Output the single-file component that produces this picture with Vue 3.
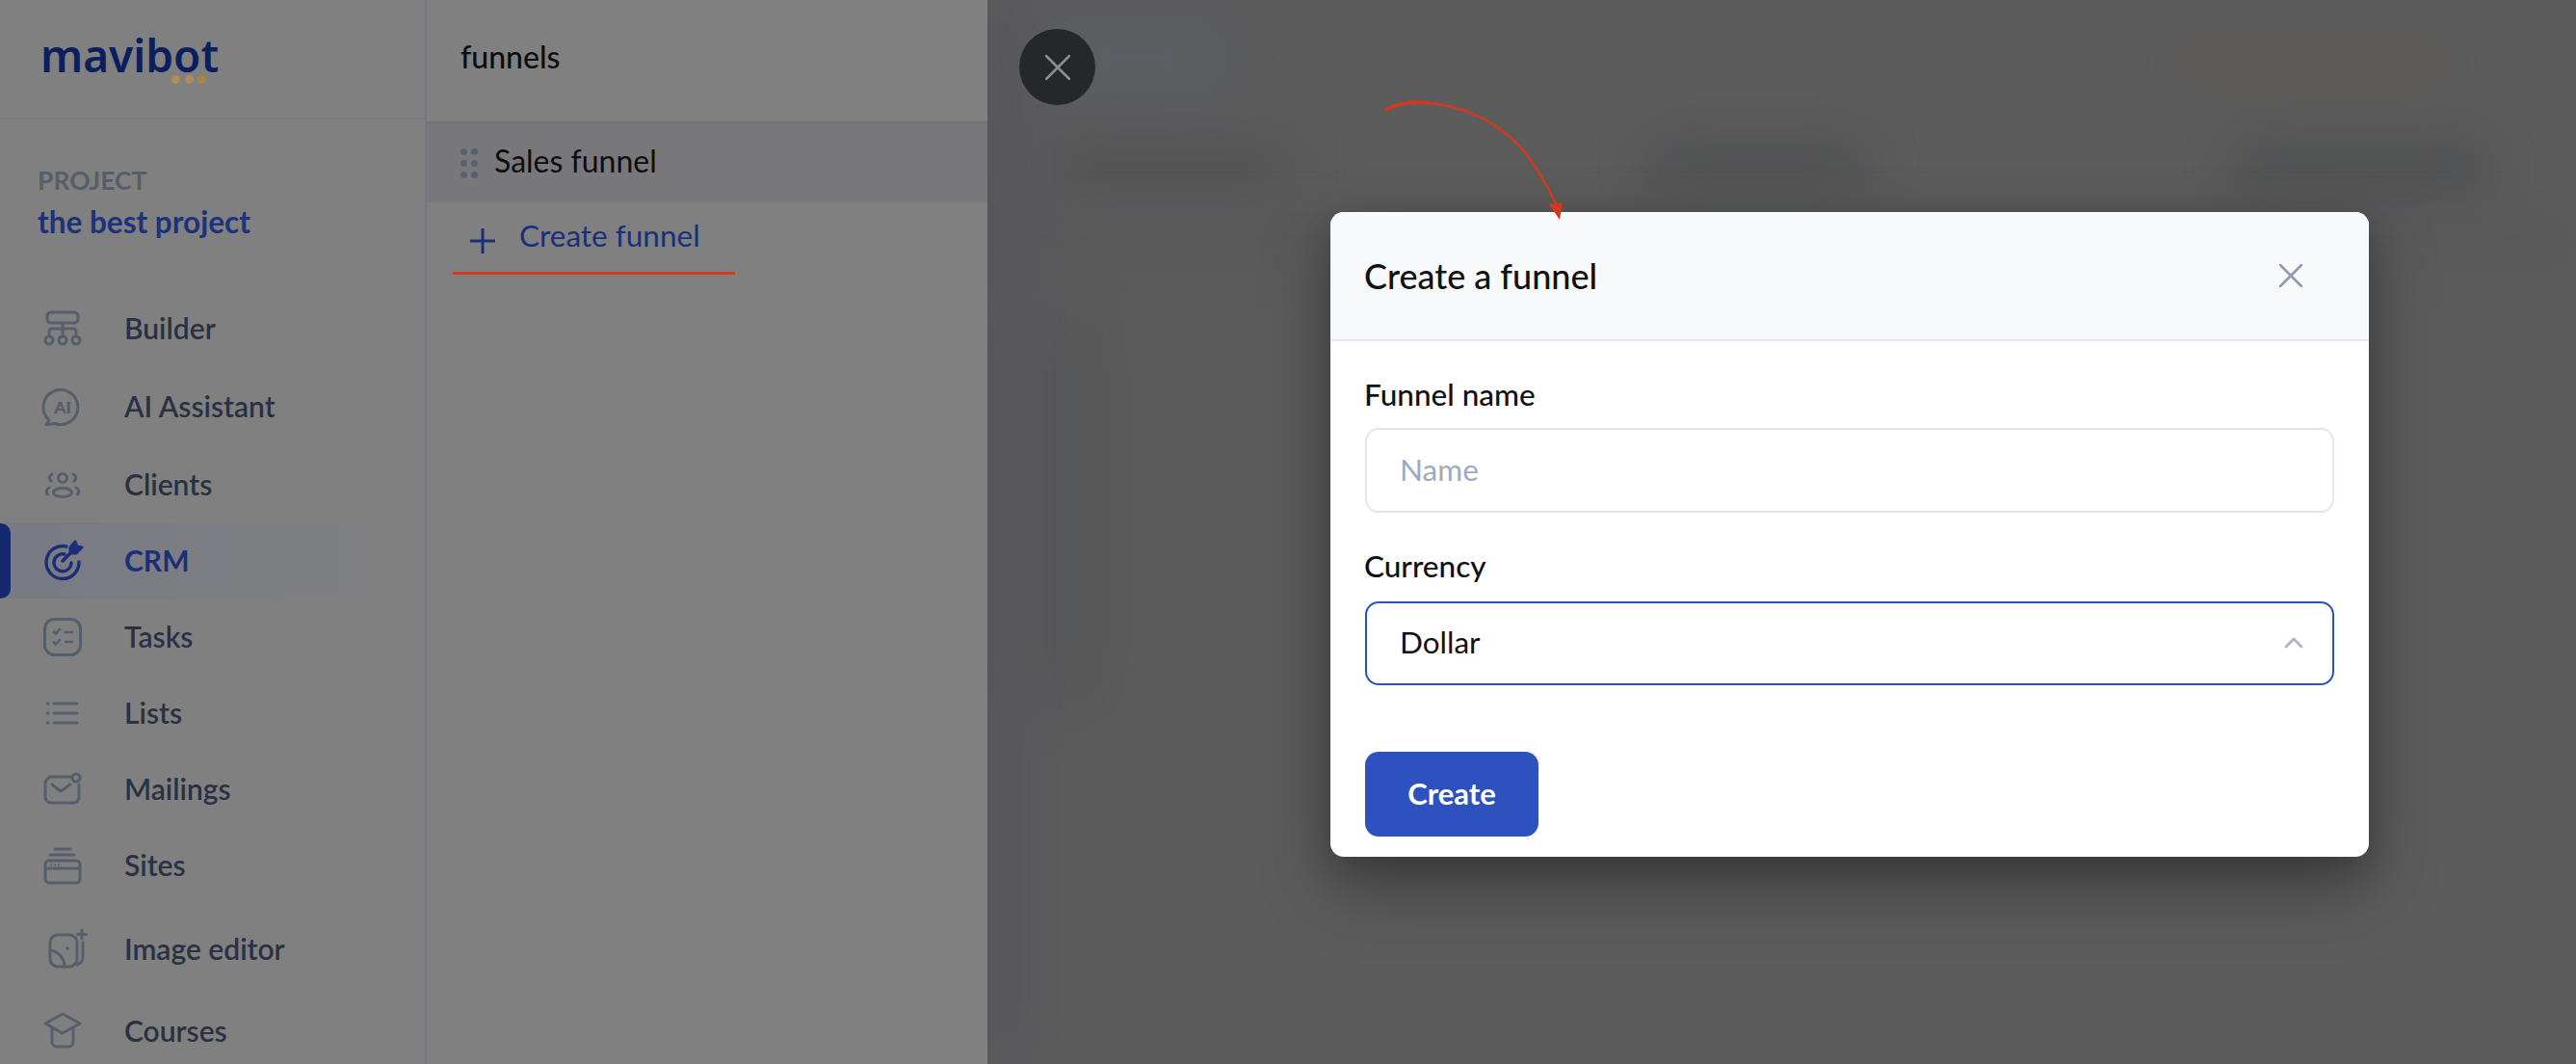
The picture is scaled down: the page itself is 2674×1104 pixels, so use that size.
<script setup>
const navItems = [
  { label: 'Builder', icon: 'builder' },
  { label: 'AI Assistant', icon: 'ai' },
  { label: 'Clients', icon: 'clients' },
  { label: 'CRM', icon: 'crm', active: true },
  { label: 'Tasks', icon: 'tasks' },
  { label: 'Lists', icon: 'lists' },
  { label: 'Mailings', icon: 'mail' },
  { label: 'Sites', icon: 'sites' },
  { label: 'Image editor', icon: 'image' },
  { label: 'Courses', icon: 'courses' }
]
</script>

<template>
  <div class="page">
    <aside class="sidebar">
      <div class="logo-box">
        <div class="logo">mavibot</div>
        <div class="logo-dots"><i></i><i></i><i></i></div>
      </div>
      <div class="project">
        <div class="project-label">PROJECT</div>
        <div class="project-name">the best project</div>
      </div>
      <nav class="nav">
        <div v-for="item in navItems" :key="item.label" class="nav-item" :class="{ active: item.active }">
          <svg class="nav-icon" viewBox="-22 -22 44 44" fill="none" stroke="currentColor" stroke-width="3" stroke-linecap="round" stroke-linejoin="round">
            <template v-if="item.icon === 'builder'">
              <rect x="-16" y="-17" width="32" height="11" rx="4" />
              <path d="M0 -6V6M-14 6V3a3 3 0 0 1 3-3H11a3 3 0 0 1 3 3V6" />
              <circle cx="-14" cy="12" r="4" /><circle cx="0" cy="12" r="4" /><circle cx="14" cy="12" r="4" />
            </template>
            <template v-else-if="item.icon === 'ai'">
              <path d="M-14 14A18 18 0 1 1 -8 17.500L-17 18.500Z" />
              <text x="0" y="6.500" text-anchor="middle" class="ai-text">AI</text>
            </template>
            <template v-else-if="item.icon === 'clients'">
              <circle cx="0" cy="-7" r="4.500" />
              <ellipse cx="0" cy="8" rx="9.500" ry="4.500" />
              <path d="M-11 -11a4 4 0 0 0 -1 7M11 -11a4 4 0 0 1 1 7M-14 3a4.500 4.500 0 0 0 -1.500 7M14 3a4.500 4.500 0 0 1 1.500 7" />
            </template>
            <template v-else-if="item.icon === 'crm'">
              <g stroke-width="3.400">
                <path d="M4 -15A17 17 0 1 0 17 1" />
                <path d="M2 -7A9 9 0 1 0 9 2" />
                <path d="M0 0L9 -9" />
              </g>
              <path d="M8 -8L8 -14L13 -20L15 -15L20 -14L14 -8Z" fill="currentColor" />
            </template>
            <template v-else-if="item.icon === 'tasks'">
              <rect x="-18.500" y="-18.500" width="37" height="37" rx="10" />
              <path d="M-9 -5.500l2 2 4 -4.500M-9 5.500l2 2 4 -4.500M3 -5h7M3 5h7" stroke-width="2.600" />
            </template>
            <template v-else-if="item.icon === 'lists'">
              <path d="M-9 -10H15M-9 0H15M-9 10H15" stroke-width="3.200" />
              <path d="M-15.500 -10h.1M-15.500 0h.1M-15.500 10h.1" stroke-width="3.600" />
            </template>
            <template v-else-if="item.icon === 'mail'">
              <path d="M9 -13H-11a7 7 0 0 0 -7 7V8a6 6 0 0 0 6 6H11a6 6 0 0 0 6 -6V-5" />
              <path d="M-11 -5L-2 2L8 -5" />
              <circle cx="14" cy="-12" r="4" />
            </template>
            <template v-else-if="item.icon === 'sites'">
              <path d="M-8 -17H8M-13 -11H12" />
              <rect x="-18" y="-5" width="36" height="23" rx="4" />
              <path d="M-18 3H18" />
              <path d="M-12 -0.500h.1M-8 -0.500h.1M-4 -0.500h.1" stroke-width="2" />
            </template>
            <template v-else-if="item.icon === 'image'">
              <rect x="-13" y="-15" width="28" height="33" rx="8" />
              <path d="M21 -7V8a8 8 0 0 1 -6 8M-13 1A17 17 0 0 1 2 18" />
              <path d="M5 -1h.1" stroke-width="3.600" />
              <path d="M20 -20v9M15.500 -15.500h9" />
            </template>
            <template v-else-if="item.icon === 'courses'">
              <path d="M0 -18L18 -8L0 2L-18 -8Z" />
              <path d="M-11 -3V11a5 5 0 0 0 5 5H6a5 5 0 0 0 5 -5V-3" />
            </template>
          </svg>
          <span class="nav-label">{{ item.label }}</span>
        </div>
      </nav>
    </aside>

    <section class="panel">
      <div class="panel-head">funnels</div>
      <div class="funnel-row">
        <div class="drag"><i></i><i></i><i></i><i></i><i></i><i></i></div>
        <span class="funnel-name">Sales funnel</span>
      </div>
      <div class="create-row">
        <svg class="plus" viewBox="0 0 26 26" fill="none" stroke="currentColor" stroke-width="3"><path d="M13 0V26M0 13H26" /></svg>
        <span class="create-text">Create funnel</span>
      </div>
      <div class="underline"></div>
    </section>

    <main class="main">
      <div class="backdrop">
        <i class="blob b1"></i><i class="blob b2"></i><i class="blob b3"></i><i class="blob b4"></i>
        <i class="blob b5"></i><i class="blob b6"></i><i class="blob b7"></i><i class="blob b8"></i>
      </div>
      <button class="round-close">
        <svg viewBox="0 0 26 26" fill="none" stroke="currentColor" stroke-width="2.600" stroke-linecap="round"><path d="M1 1L25 25M25 1L1 25" /></svg>
      </button>
      <div class="modal">
        <header class="modal-head">
          <h2>Create a funnel</h2>
          <svg class="modal-x" viewBox="0 0 24 24" fill="none" stroke="currentColor" stroke-width="2.600" stroke-linecap="round"><path d="M1 1L23 23M23 1L1 23" /></svg>
        </header>
        <div class="modal-body">
          <label class="field-label">Funnel name</label>
          <div class="input placeholder">Name</div>
          <label class="field-label second">Currency</label>
          <div class="input select">
            <span>Dollar</span>
            <svg class="chev" viewBox="0 0 20 12" fill="none" stroke="currentColor" stroke-width="2.800" stroke-linecap="round" stroke-linejoin="round"><path d="M2 10L10 2L18 10" /></svg>
          </div>
          <button class="create-btn">Create</button>
        </div>
      </div>
    </main>

    <svg class="arrow" viewBox="0 0 200 140" fill="none">
      <path d="M2 10C16 2 34 0 50 3C90 8 125 26 150 58C163 76 172 92 180 110" stroke="#d13a1e" stroke-width="2.400" />
      <path d="M2 10C16 3 34 0.500 50 3.500" stroke="#d13a1e" stroke-width="3.400" />
      <path d="M172 108L186 106L183 124Z" fill="#d13a1e" />
    </svg>
  </div>
</template>

<style>
html, body { margin: 0; overflow: hidden; background: #5c5d5e; }
</style>

<style scoped>
.page {
  position: relative;
  display: flex;
  width: 100vw;
  height: 100vh;
  overflow: hidden;
  font-family: Lato, "Noto Sans", sans-serif;
}
.sidebar {
  flex: 0 0 441px;
  background: #808080;
  border-right: 2px solid #767780;
  display: flex;
  flex-direction: column;
  overflow: hidden;
}
.logo-box {
  box-sizing: border-box;
  flex: 0 0 124px;
  border-bottom: 2px solid #777782;
  padding: 27px 0 0 42px;
  position: relative;
}
.logo {
  font-family: "Noto Sans", sans-serif;
  font-size: 46px;
  line-height: 60px;
  font-weight: 600;
  color: #0b1f5e;
}
.logo-dots {
  display: flex;
  gap: 4.500px;
  position: absolute;
  left: 178px;
  top: 78px;
}
.logo-dots i {
  width: 9px;
  height: 9px;
  border-radius: 50%;
  background: #ae8c5c;
}
.logo-dots i:last-child { background: #ae8244; }
.project { padding: 46px 0 0 39px; }
.project-label {
  font-size: 26.500px;
  line-height: 34px;
  font-weight: 700;
  color: #565e6b;
}
.project-name {
  font-size: 31.500px;
  line-height: 38px;
  margin-top: 7px;
  font-weight: 700;
  color: #1c327c;
}
.nav {
  margin-top: 51px;
  display: grid;
  grid-template-rows: 81px 81px 81px 78px 80px 78px 80px 78px 95px 76px;
}
.nav-item {
  display: flex;
  align-items: center;
  padding-left: 43px;
  color: #2a3142;
  position: relative;
}
.nav-item.active {
  color: #1b2f78;
  background: linear-gradient(90deg, #787a84, #7e7f83 60%, #808080);
}
.nav-item.active::before {
  content: "";
  position: absolute;
  left: 0;
  top: 0;
  bottom: 0;
  width: 11px;
  background: #15296f;
  border-radius: 0 10px 10px 0;
}
.nav-icon {
  width: 44px;
  height: 44px;
  flex: none;
  color: #565e6c;
  overflow: visible;
}
.active .nav-icon { color: #1b2f78; }
.ai-text {
  font-family: Lato, sans-serif;
  font-size: 17px;
  font-weight: 800;
  fill: currentColor;
  stroke: none;
}
.nav-label {
  margin-left: 42px;
  margin-top: -2px;
  font-size: 30px;
  font-weight: 600;
}
.active .nav-label { font-weight: 700; }

.panel {
  flex: 0 0 582px;
  background: #808080;
  font-size: 32px;
  color: #0d0d0f;
  display: flex;
  flex-direction: column;
}
.panel-head {
  box-sizing: border-box;
  height: 126px;
  padding: 38px 0 0 35px;
  line-height: 42px;
  font-weight: 500;
}
.funnel-row {
  height: 84px;
  box-sizing: border-box;
  background: #78787a;
  border-top: 2px solid #737375;
  display: flex;
  align-items: center;
  padding-left: 35px;
}
.drag {
  display: grid;
  grid-template-columns: 7px 7px;
  gap: 5px 4px;
  width: 18px;
  margin-right: 17px;
}
.drag i {
  width: 7px;
  height: 7px;
  border-radius: 50%;
  background: #596170;
}
.funnel-name { margin-top: -5px; }
.create-row {
  display: flex;
  align-items: flex-start;
  height: 72px;
  padding-left: 45px;
  color: #1b2f78;
}
.plus {
  width: 26px;
  height: 26px;
  margin-top: 27px;
}
.create-text {
  margin-left: 25px;
  margin-top: 13px;
  line-height: 42px;
  font-size: 31.500px;
}
.underline {
  width: 293px;
  height: 3px;
  margin-left: 27px;
  background: #d63a1e;
}

.main {
  flex: 1;
  position: relative;
  padding: 220px 0 0 356px;
  box-sizing: border-box;
  min-width: 0;
  background: #5c5c5d;
}
.backdrop {
  position: absolute;
  inset: 0;
  overflow: hidden;
}
.blob {
  position: absolute;
  display: block;
  filter: blur(26px);
  background: #4e4f50;
  border-radius: 20px;
}
.b1 { left: 60px; top: 150px; width: 260px; height: 44px; opacity: .8; }
.b2 { left: 680px; top: 146px; width: 240px; height: 50px; opacity: .9; }
.b3 { left: 1290px; top: 146px; width: 270px; height: 56px; opacity: .9; }
.b4 { left: 0; top: 230px; width: 1649px; height: 40px; opacity: .3; }
.b5 { left: 40px; top: 320px; width: 90px; height: 420px; opacity: .4; }
.b6 { left: 0; top: 0; width: 30px; height: 1104px; background: #505155; opacity: .8; }
.b7 { left: 60px; top: 20px; width: 190px; height: 80px; background: #5b6068; opacity: .5; }
.b8 { left: 1225px; top: 30px; width: 300px; height: 70px; background: #5e5a52; opacity: .4; }

.round-close {
  position: absolute;
  left: 33px;
  top: 30px;
  width: 79px;
  height: 79px;
  border: 0;
  padding: 0;
  border-radius: 50%;
  background: #26272a;
  color: #8c8c8c;
  display: flex;
  align-items: center;
  justify-content: center;
}
.round-close svg { width: 26px; height: 26px; }

.modal {
  position: relative;
  width: 1078px;
  height: 669px;
  border-radius: 14px;
  background: #fff;
  box-shadow: 0 30px 70px rgba(0, 0, 0, .34), 0 10px 30px rgba(0, 0, 0, .14);
  overflow: hidden;
}
.modal-head {
  box-sizing: border-box;
  height: 134px;
  padding: 0 35px;
  background: #f7f9fb;
  border-bottom: 2px solid #e2e6f0;
  display: flex;
  align-items: center;
  justify-content: space-between;
}
.modal-head h2 {
  margin: 0;
  font-size: 36px;
  font-weight: 500;
  color: #101114;
}
.modal-x {
  width: 24px;
  height: 24px;
  margin-right: 34px;
  color: #8f9bb3;
}
.modal-body {
  padding: 35px 36px 0;
  display: flex;
  flex-direction: column;
  align-items: flex-start;
}
.field-label {
  margin-left: -1px;
  font-size: 31.500px;
  line-height: 40px;
  color: #101114;
  font-weight: 500;
}
.field-label.second { margin-top: 35px; }
.input {
  box-sizing: border-box;
  width: 1006px;
  height: 88px;
  margin-top: 15px;
  border: 2px solid #e2e6ef;
  border-radius: 14px;
  padding: 0 34px 3px;
  font-size: 31.500px;
  display: flex;
  align-items: center;
}
.placeholder { color: #a0a9bd; }
.select {
  border-color: #2c52c0;
  color: #101114;
  justify-content: space-between;
  margin-top: 17px;
  height: 87px;
}
.chev {
  width: 20px;
  height: 12px;
  margin-right: -4px;
  margin-top: 2px;
  color: #aab4c5;
}
.create-btn {
  margin-top: 69px;
  width: 180px;
  height: 88px;
  border: 0;
  border-radius: 14px;
  padding: 0 0 3px;
  background: #2d52c0;
  color: #fff;
  font-family: inherit;
  font-size: 31px;
  font-weight: 700;
}
.arrow {
  position: absolute;
  left: 1436px;
  top: 104px;
  width: 200px;
  height: 140px;
  overflow: visible;
  pointer-events: none;
}
</style>
